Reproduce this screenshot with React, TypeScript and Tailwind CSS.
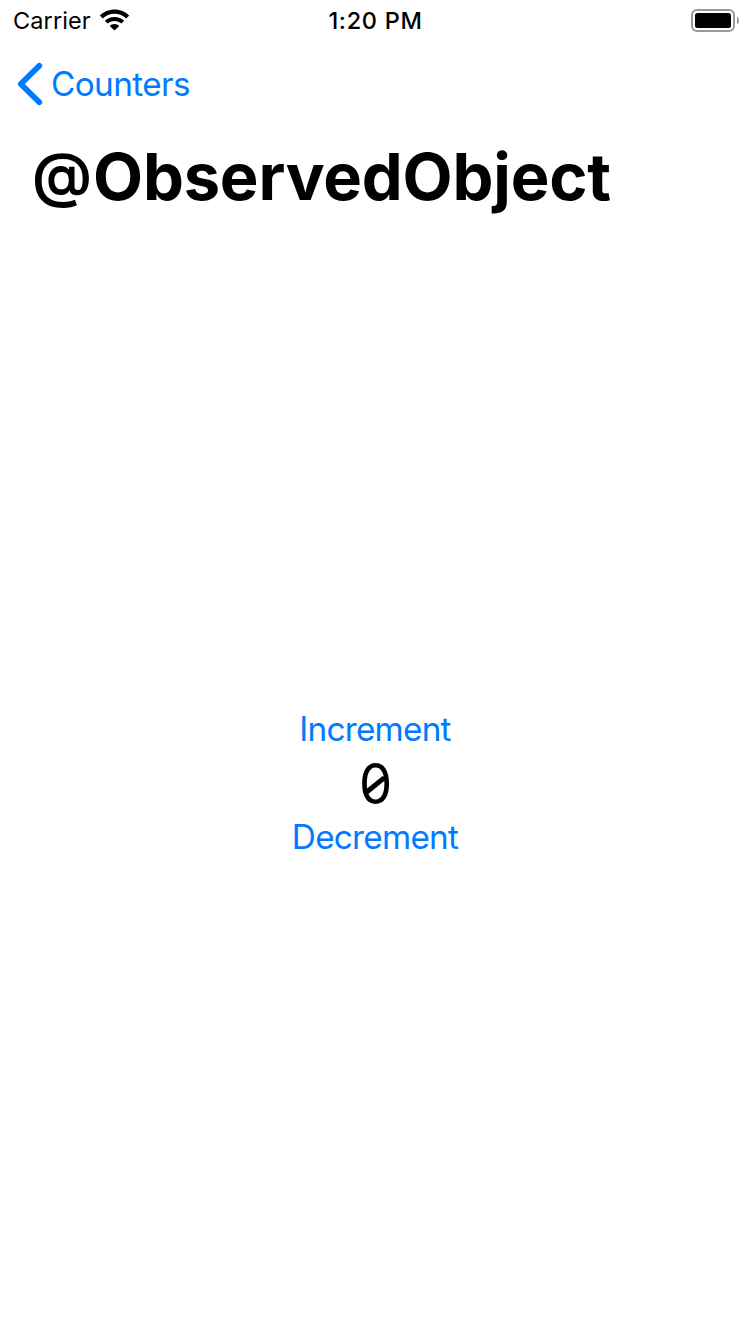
export default function App() {
  return (
    <div className="flex h-[1334px] w-[750px] flex-col bg-white font-['Inter',sans-serif] text-black">
      <header className="grid h-10 grid-cols-3 items-center text-[23.5px]">
        <div className="flex items-center gap-2 pl-[13px]">
          <span className="pt-0.5 leading-9 tracking-[0.1px]">Carrier</span>
          <svg width="31" height="22" viewBox="-0.5 -0.5 31 22" aria-hidden="true">
            <path d="M15 0C9.3 0 4.1 2.3 0.3 6L3.3 9C6.3 6 10.4 4.2 15 4.2S23.7 6 26.7 9l3-3C25.9 2.3 20.7 0 15 0Z" />
            <path d="M15 7.4c-3.8 0-7.2 1.4-9.7 3.8l2.9 2.9c1.8-1.6 4.1-2.6 6.8-2.6s5 1 6.8 2.6l2.9-2.9c-2.5-2.4-5.9-3.8-9.7-3.8Z" />
            <path d="M15 14.6c-1.9 0-3.5.7-4.7 1.8l4.7 4.7 4.7-4.7c-1.2-1.1-2.8-1.8-4.7-1.8Z" />
          </svg>
        </div>
        <span className="pt-0.5 pl-px text-center leading-9 font-medium tracking-[0.7px]">1:20 PM</span>
        <svg className="justify-self-end" width="59" height="24" viewBox="691 8 59 24" aria-hidden="true">
          <rect x="692" y="10" width="42" height="21" rx="5" fill="none" stroke="#999" strokeWidth="2" />
          <rect x="695" y="13" width="36" height="15" rx="2.5" />
          <path d="M737 16.5c2.6 1 2.6 7 0 8Z" fill="#999" />
        </svg>
      </header>
      <nav className="flex h-[88px] items-center gap-2 pl-[17px] text-[33.3px] text-[#007aff]">
        <svg width="26" height="44" viewBox="0 0 26 44" fill="none" stroke="currentColor" strokeWidth="5.8" strokeLinecap="round" strokeLinejoin="round" aria-hidden="true">
          <path d="M22.3 3.8 3.8 22l18.5 18.2" />
        </svg>
        <button className="pt-0.5 tracking-[-0.6px]">Counters</button>
      </nav>
      <h1 className="h-[104px] pl-8 pt-[9px] text-[65px] leading-[80px] font-bold tracking-[-0.2px]">
        <span className="mr-[3px] inline-block w-[58px] align-[4px] text-[60px] leading-none font-semibold">@</span>ObservedObject
      </h1>
      <main className="flex flex-col items-center pt-[476px]">
        <button className="h-[42px] text-[33.3px] leading-[42px] tracking-[-0.75px] text-[#007aff]">Increment</button>
        <output className="relative mt-0.5 h-16 pl-px text-[56px] leading-[65px]">
          <span className="inline-block scale-x-[0.94]">0</span>
          <span className="absolute top-[33px] left-1/2 h-[4.5px] w-[24px] -translate-x-1/2 -translate-y-1/2 -rotate-[39deg] bg-black" />
        </output>
        <button className="h-[42px] text-[33.3px] leading-[42px] tracking-[-0.75px] text-[#007aff]">Decrement</button>
      </main>
    </div>
  );
}
